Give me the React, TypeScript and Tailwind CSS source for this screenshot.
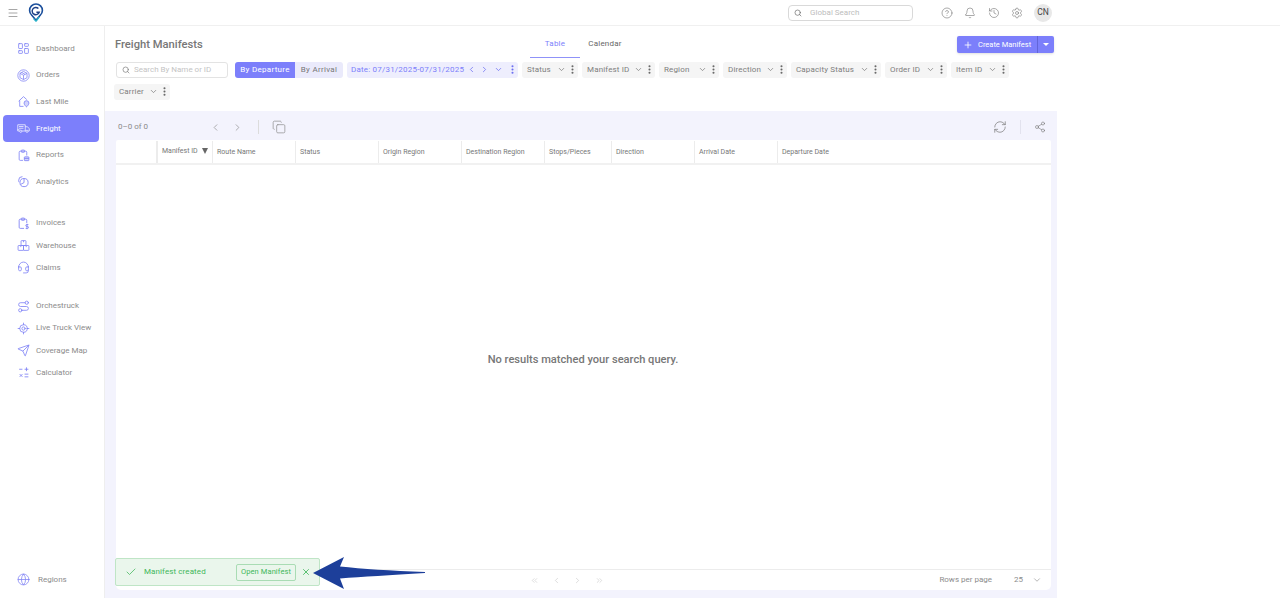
import {
  Bell,
  Check,
  ChevronDown,
  ChevronLeft,
  ChevronRight,
  ChevronsLeft,
  CircleHelp,
  Copy,
  EllipsisVertical,
  Globe,
  Headset,
  History,
  LayoutDashboard,
  LocateFixed,
  Menu,
  Plus,
  RefreshCw,
  Route,
  Search,
  Send,
  Settings,
  Share2,
  X,
  type LucideIcon,
} from "lucide-react";

type IconProps = { className?: string; strokeWidth?: number };

function OrdersIcon({ className }: IconProps) {
  return (
    <svg viewBox="0 0 24 24" fill="none" stroke="currentColor" strokeWidth="1.4" className={className}>
      <circle cx="12" cy="12" r="10.500" />
      <path d="M12 4.500 18.500 8v8L12 19.500 5.500 16V8ZM5.500 8 12 11.500 18.500 8M12 11.500v8M8.500 6.300 15 10" />
    </svg>
  );
}

function LastMileIcon({ className }: IconProps) {
  return (
    <svg viewBox="0 0 24 24" fill="none" stroke="currentColor" strokeWidth="1.5" className={className}>
      <path d="M3 11.500 12 3l6 5.500M5 10v11h7" />
      <path d="M17.500 22s-4.500-3.800-4.500-7a4.500 4.500 0 0 1 9 0c0 3.200-4.500 7-4.500 7Z" fill="currentColor" fillOpacity="0.35" />
    </svg>
  );
}

function FreightIcon({ className }: IconProps) {
  return (
    <svg viewBox="0 0 26 20" fill="none" stroke="currentColor" strokeWidth="1.4" className={className}>
      <path d="M5 15H1.500V2.500h15V15H10M16.500 6.500H21l3.500 4V15h-2M16.500 15h1" />
      <path d="M4 6h9M4 9.500h9M1 12.500h4" />
      <circle cx="7.500" cy="15.500" r="2.200" />
      <circle cx="20" cy="15.500" r="2.200" />
    </svg>
  );
}

function ReportsIcon({ className }: IconProps) {
  return (
    <svg viewBox="0 0 24 24" fill="none" stroke="currentColor" strokeWidth="1.5" className={className}>
      <path d="M11 21H6a2 2 0 0 1-2-2V6a2 2 0 0 1 2-2h10a2 2 0 0 1 2 2v6" />
      <rect x="8" y="2" width="6" height="4" rx="1" />
      <rect x="13.500" y="14.500" width="8.500" height="7" rx="1" fill="currentColor" fillOpacity="0.35" />
      <path d="M13.500 17.500h8.500" />
    </svg>
  );
}

function AnalyticsIcon({ className }: IconProps) {
  return (
    <svg viewBox="0 0 24 24" fill="none" stroke="currentColor" strokeWidth="1.6" className={className}>
      <path d="M10 3a7 7 0 0 0-7 7c0 1.300.3 2.400.9 3.400" />
      <circle cx="13" cy="14" r="7.500" />
      <path d="M13 6.500V14l-6.500 3.500" />
    </svg>
  );
}

function InvoiceIcon({ className }: IconProps) {
  return (
    <svg viewBox="0 0 24 24" fill="none" stroke="currentColor" strokeWidth="1.6" className={className}>
      <path d="M13 21H6a2 2 0 0 1-2-2V6a2 2 0 0 1 2-2h10a2 2 0 0 1 2 2v5" />
      <rect x="8" y="2" width="6" height="4" rx="1" />
      <path d="M21 14h-3a1.500 1.500 0 0 0 0 3.500h1.500a1.500 1.500 0 0 1 0 3.500H16M18.500 12.500v10" />
    </svg>
  );
}

function WarehouseIcon({ className }: IconProps) {
  return (
    <svg viewBox="0 0 24 24" fill="none" stroke="currentColor" strokeWidth="1.5" className={className}>
      <rect x="7.500" y="3" width="9" height="9" rx="1" />
      <rect x="2" y="12" width="10" height="9" rx="1" />
      <rect x="12" y="12" width="10" height="9" rx="1" />
      <path d="M12 3v3M7 12v3M17 12v3" />
    </svg>
  );
}

function CalcIcon({ className }: IconProps) {
  return (
    <svg viewBox="0 0 24 24" fill="none" stroke="currentColor" strokeWidth="1.6" className={className}>
      <path d="M4 6h6M14 6h7M17.500 2.500v7M5 15l5 5M10 15l-5 5M14 15h7M14 20h7" />
    </svg>
  );
}

function Logo() {
  return (
    <svg viewBox="0 0 20 24" className="h-[20px] w-[16px]" fill="none">
      <path d="M10 21 L4.500 14.500 A8 8 0 1 1 15.500 14.500 Z" stroke="#1b4f9c" strokeWidth="2" />
      <path d="M10 22.500 L7 19M10 22.500 L14 17" stroke="#27b3c9" strokeWidth="1.600" />
      <path d="M13 6.500 A4.500 4.500 0 1 0 14 11 H10.500" stroke="#1d3f86" strokeWidth="1.800" />
    </svg>
  );
}

type NavItem = { label: string; icon: LucideIcon | typeof CalcIcon; active?: boolean };

const mainNav: NavItem[] = [
  { label: "Dashboard", icon: LayoutDashboard },
  { label: "Orders", icon: OrdersIcon },
  { label: "Last Mile", icon: LastMileIcon },
  { label: "Freight", icon: FreightIcon, active: true },
  { label: "Reports", icon: ReportsIcon },
  { label: "Analytics", icon: AnalyticsIcon },
];
const billingNav: NavItem[] = [
  { label: "Invoices", icon: InvoiceIcon },
  { label: "Warehouse", icon: WarehouseIcon },
  { label: "Claims", icon: Headset },
];
const toolsNav: NavItem[] = [
  { label: "Orchestruck", icon: Route },
  { label: "Live Truck View", icon: LocateFixed },
  { label: "Coverage Map", icon: Send },
  { label: "Calculator", icon: CalcIcon },
];

const filters = [
  { label: "Status", width: "w-[56px]" },
  { label: "Manifest ID", width: "w-[73px]" },
  { label: "Region", width: "w-[60px]" },
  { label: "Direction", width: "w-[64px]" },
  { label: "Capacity Status", width: "w-[90px]" },
  { label: "Order ID", width: "w-[62px]" },
  { label: "Item ID", width: "w-[58px]" },
];

const columns = [
  { label: "Route Name", width: "w-[83px]" },
  { label: "Status", width: "w-[83px]" },
  { label: "Origin Region", width: "w-[83px]" },
  { label: "Destination Region", width: "w-[83px]" },
  { label: "Stops/Pieces", width: "w-[67px]" },
  { label: "Direction", width: "w-[83px]" },
  { label: "Arrival Date", width: "w-[83px]" },
];

function NavRow({ item, height }: { item: NavItem; height: string }) {
  const Icon = item.icon;
  return (
    <div
      className={`ml-[3px] mr-[5px] flex items-center gap-[6px] rounded-[4px] pl-[14px] text-[8px] ${height} ${
        item.active ? "bg-[#7c7ffb] text-white" : "text-[#8c8c8c]"
      }`}
    >
      <Icon className={`h-[13px] w-[13px] shrink-0 ${item.active ? "text-white" : "text-[#7f82f5]"}`} strokeWidth={1.5} />
      <span>{item.label}</span>
    </div>
  );
}

function FilterChip({ label, width }: { label: string; width: string }) {
  return (
    <div className={`flex h-[15.500px] items-center justify-between rounded-[3px] bg-[#f5f5f5] pl-[5px] text-[8px] tracking-[0.15px] text-[#7d7d7d] ${width}`}>
      <span className="whitespace-nowrap">{label}</span>
      <span className="flex items-center gap-[1px]">
        <ChevronDown className="h-[9px] w-[9px]" strokeWidth={2} />
        <EllipsisVertical className="h-[11px] w-[11px] text-[#666]" strokeWidth={2.5} />
      </span>
    </div>
  );
}

export default function App() {
  return (
    <div className="relative flex h-[598px] w-[1280px] flex-col overflow-hidden bg-white font-['Roboto',sans-serif]">
      <header className="flex h-[26px] shrink-0 items-center border-b border-[#f0f0f0] pl-[7px] pr-[228px]">
        <Menu className="h-[12px] w-[12px] text-[#8a8a8a]" strokeWidth={1.5} />
        <div className="ml-[9px]">
          <Logo />
        </div>
        <div className="ml-auto flex h-[16px] w-[125px] items-center gap-[8px] rounded-[4px] border border-[#d9d9d9] pl-[5px] text-[8px] text-[#bdbdbd]">
          <Search className="h-[8px] w-[8px] text-[#666]" />
          <span>Global Search</span>
        </div>
        <div className="ml-[28px] flex items-center gap-[11.300px] text-[#7d7d7d]">
          <CircleHelp className="h-[12px] w-[12px]" strokeWidth={1.3} />
          <Bell className="h-[12px] w-[12px]" strokeWidth={1.3} />
          <History className="h-[12px] w-[12px]" strokeWidth={1.3} />
          <Settings className="h-[12px] w-[12px]" strokeWidth={1.3} />
        </div>
        <div className="ml-[11px] flex h-[18px] w-[18px] items-center justify-center rounded-full bg-[#e8e8e8] text-[8.500px] text-[#444]">
          CN
        </div>
      </header>

      <div className="flex min-h-0 flex-1">
        <aside className="flex w-[105px] shrink-0 flex-col border-r border-[#eeeeee] pb-[12px] pt-[9.500px]">
          {mainNav.map((item) => (
            <NavRow key={item.label} item={item} height="h-[26.600px]" />
          ))}
          <div className="mt-[17px]" />
          {billingNav.map((item) => (
            <NavRow key={item.label} item={item} height="h-[22.300px]" />
          ))}
          <div className="mt-[16px]" />
          {toolsNav.map((item) => (
            <NavRow key={item.label} item={item} height="h-[22.300px]" />
          ))}
          <div className="mt-auto flex items-center gap-[8px] pl-[17px] text-[8px] text-[#8c8c8c]">
            <Globe className="h-[13px] w-[13px] text-[#7f82f5]" strokeWidth={1.4} />
            <span>Regions</span>
          </div>
        </aside>

        <main className="flex w-[952px] shrink-0 flex-col">
          <div className="flex h-[36px] shrink-0 items-start pl-[10px] pr-[3px]">
            <h1 className="mt-[11px] w-[415px] text-[11.200px] font-medium text-[#777]">Freight Manifests</h1>
            <div className="flex h-[32px] w-[50px] items-center justify-center border-b border-[#8f92f8] pt-[4px] text-[8px] tracking-[0.2px] text-[#7c7ffb]">
              Table
            </div>
            <div className="flex h-[32px] w-[50px] items-center justify-center pt-[4px] text-[8px] tracking-[0.2px] text-[#666]">
              Calendar
            </div>
            <div className="ml-auto mt-[10px] flex h-[17px] w-[97px] items-center rounded-[2px] bg-[#7c7ffb] text-[7.500px] text-white shadow-sm">
              <div className="flex flex-1 items-center gap-[5px] pl-[6px]">
                <Plus className="h-[10px] w-[10px]" strokeWidth={2} />
                <span className="whitespace-nowrap">Create Manifest</span>
              </div>
              <div className="flex h-full w-[17px] items-center justify-center border-l border-[#6265d8]">
                <span className="h-0 w-0 border-x-[3px] border-t-[3px] border-x-transparent border-t-white" />
              </div>
            </div>
          </div>

          <div className="flex h-[49px] shrink-0 flex-wrap content-start items-start gap-x-[4px] gap-y-[6.500px] pl-[11px]">
            <div className="flex h-[15.500px] w-[112px] items-center gap-[4px] rounded-[3px] border border-[#e3e3e3] pl-[5px] text-[8px] text-[#c4c4c4]">
              <Search className="h-[8px] w-[8px] text-[#777]" />
              <span className="whitespace-nowrap">Search By Name or ID</span>
            </div>
            <div className="ml-[3px] flex h-[15.500px] w-[108px] overflow-hidden rounded-[3px] text-[8px] tracking-[0.3px]">
              <div className="flex w-[60px] items-center justify-center bg-[#7c7ffb] text-white">By Departure</div>
              <div className="flex flex-1 items-center justify-center bg-[#eaeafb] text-[#777]">By Arrival</div>
            </div>
            <div className="flex h-[15.500px] w-[171px] items-center justify-between rounded-[3px] bg-[#eeeefd] pl-[4px] text-[8px] tracking-[0.2px] text-[#7c7ffb]">
              <span className="whitespace-nowrap">Date: 07/31/2025-07/31/2025</span>
              <span className="flex items-center gap-[4.500px] text-[#6a6df0]">
                <ChevronLeft className="h-[9px] w-[9px]" strokeWidth={2} />
                <ChevronRight className="h-[9px] w-[9px]" strokeWidth={2} />
                <ChevronDown className="h-[9px] w-[9px]" strokeWidth={2} />
                <EllipsisVertical className="h-[11px] w-[11px]" strokeWidth={2.5} />
              </span>
            </div>
            {filters.map((f) => (
              <FilterChip key={f.label} label={f.label} width={f.width} />
            ))}
            <div className="-ml-[2px]">
              <FilterChip label="Carrier" width="w-[56px]" />
            </div>
          </div>

          <section className="flex min-h-0 flex-1 flex-col bg-[#f3f3fd] pb-[8px] pl-[11px] pr-[6px]">
            <div className="flex h-[29px] shrink-0 items-center pt-[3px] text-[8px] text-[#8a8a8a]">
              <span className="ml-[2px] w-[92px]">0–0 of 0</span>
              <ChevronLeft className="h-[11px] w-[11px] text-[#8c8c8c]" strokeWidth={1.5} />
              <ChevronRight className="ml-[11px] h-[11px] w-[11px] text-[#8c8c8c]" strokeWidth={1.5} />
              <span className="ml-[15px] h-[14px] w-px bg-[#dcdcdc]" />
              <Copy className="ml-[13px] h-[14px] w-[14px] text-[#8c8c8c]" strokeWidth={1.2} />
              <RefreshCw className="ml-auto h-[14px] w-[14px] text-[#777]" strokeWidth={1.2} />
              <span className="ml-[13px] h-[14px] w-px bg-[#e2e2ee]" />
              <Share2 className="ml-[13px] mr-[5px] h-[12px] w-[12px] text-[#777]" strokeWidth={1.2} />
            </div>

            <div className="flex min-h-0 flex-1 flex-col rounded-b-[5px] rounded-t-[2px] bg-white">
              <div className="flex h-[25px] shrink-0 border-b-2 border-[#f1f1f1] pt-[1px] text-[7px] text-[#777]">
                <div className="w-[42px] border-r-2 border-[#ececec]" />
                <div className="flex w-[55px] items-center justify-between border-r border-[#ececec] pl-[4px] pr-[4px]">
                  <span className="-mt-[2px] whitespace-nowrap">Manifest ID</span>
                  <span className="-mt-[2px] h-0 w-0 border-x-[3.500px] border-t-[6px] border-x-transparent border-t-[#666]" />
                </div>
                {columns.map((c) => (
                  <div key={c.label} className={`flex items-center whitespace-nowrap border-r border-[#ececec] pl-[4px] ${c.width}`}>
                    {c.label}
                  </div>
                ))}
                <div className="flex flex-1 items-center pl-[4px]">Departure Date</div>
              </div>

              <div className="flex flex-1 items-center justify-center pb-[13px] pr-[1px] text-[11.100px] font-medium text-[#777]">
                No results matched your search query.
              </div>

              <div className="flex h-[21px] shrink-0 items-center border-t border-[#ececec] pr-[9px] text-[8px] text-[#8c8c8c]">
                <div className="ml-[414px] flex items-center gap-[12.500px] text-[#c4c4c4]">
                  <ChevronsLeft className="h-[9px] w-[9px]" strokeWidth={1.5} />
                  <ChevronLeft className="h-[9px] w-[9px]" strokeWidth={1.5} />
                  <ChevronRight className="h-[9px] w-[9px]" strokeWidth={1.5} />
                  <ChevronsLeft className="h-[9px] w-[9px] -scale-x-100" strokeWidth={1.5} />
                </div>
                <span className="ml-auto">Rows per page</span>
                <span className="ml-[22px]">25</span>
                <ChevronDown className="ml-[9px] h-[10px] w-[10px]" strokeWidth={1.5} />
              </div>
            </div>
          </section>
        </main>
      </div>

      <div className="absolute left-[115px] top-[558px] flex h-[28px] w-[205px] items-center rounded-[2px] border border-[#bfe5c6] bg-[#eaf6ec] text-[8px] tracking-[0.1px] text-[#3fb65a]">
        <Check className="ml-[9px] h-[12px] w-[12px]" strokeWidth={1.5} />
        <span className="ml-[7px] w-[60px] whitespace-nowrap">Manifest created</span>
        <div className="ml-[32px] flex h-[17px] w-[60px] items-center justify-center whitespace-nowrap rounded-[2px] border border-[#a9dcb4] text-[7.500px]">
          Open Manifest
        </div>
        <X className="ml-[5px] h-[10px] w-[10px]" strokeWidth={2} />
      </div>

      <svg viewBox="0 0 112 34" className="absolute left-[313px] top-[556px] h-[34px] w-[112px]">
        <path d="M0 17 L31 1 L27 10.500 Q60 14 112 16 L112 17 Q60 20 27 22.500 L31 33 Z" fill="#1d3f9a" />
      </svg>
    </div>
  );
}
